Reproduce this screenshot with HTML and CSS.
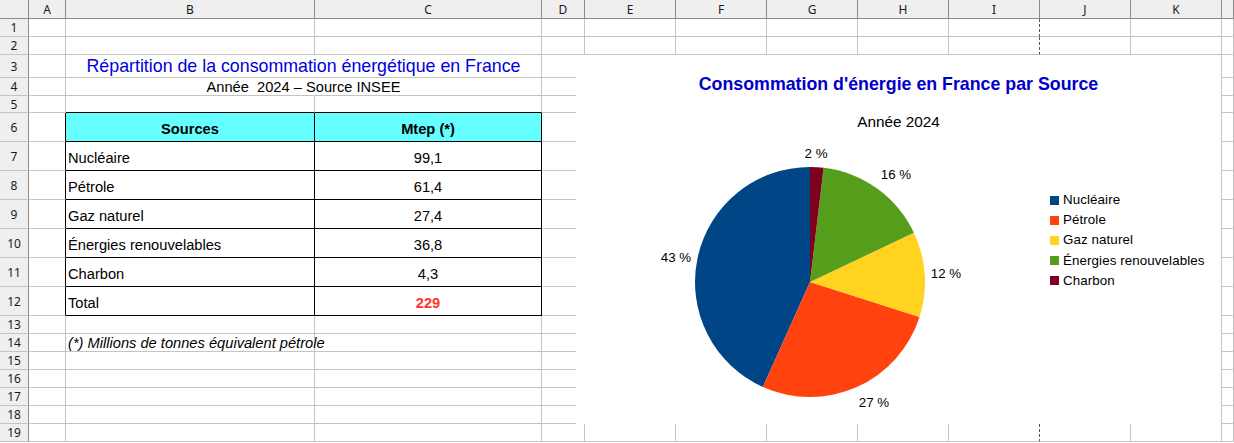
FILE: index.html
```html
<!DOCTYPE html>
<html lang="fr">
<head>
  <meta charset="UTF-8">
  <title>Consommation énergétique en France</title>
  <link rel="stylesheet" href="styles.css">
</head>
<body>
  <div class="sheet">
    <!-- column headers -->
    <div class="hd corner"></div>
    <div class="hd col">A</div><div class="hd col">B</div><div class="hd col">C</div><div class="hd col">D</div>
    <div class="hd col">E</div><div class="hd col">F</div><div class="hd col">G</div><div class="hd col">H</div>
    <div class="hd col">I</div><div class="hd col">J</div><div class="hd col">K</div><div class="hd col"></div>

    <!-- 1 -->
    <div class="hd rh">1</div>
    <div class="c"></div><div class="c"></div><div class="c"></div><div class="c"></div><div class="c"></div><div class="c"></div>
    <div class="c"></div><div class="c"></div><div class="c pb"></div><div class="c"></div><div class="c"></div><div class="c"></div>
    <!-- 2 -->
    <div class="hd rh">2</div>
    <div class="c"></div><div class="c"></div><div class="c"></div><div class="c"></div><div class="c"></div><div class="c"></div>
    <div class="c"></div><div class="c"></div><div class="c pb"></div><div class="c"></div><div class="c"></div><div class="c"></div>
    <!-- 3 -->
    <div class="hd rh">3</div>
    <div class="c"></div><div class="c span2 center sheet-title">Répartition de la consommation énergétique en France</div>
    <div class="c"></div><div class="c"></div><div class="c"></div>
    <div class="c"></div><div class="c"></div><div class="c pb"></div><div class="c"></div><div class="c"></div><div class="c"></div>
    <!-- 4 -->
    <div class="hd rh">4</div>
    <div class="c"></div><div class="c span2 center">Année&nbsp; 2024 – Source INSEE</div>
    <div class="c"></div><div class="c"></div><div class="c"></div>
    <div class="c"></div><div class="c"></div><div class="c pb"></div><div class="c"></div><div class="c"></div><div class="c"></div>
    <!-- 5 -->
    <div class="hd rh">5</div>
    <div class="c"></div><div class="c tb-top"></div><div class="c tb-top"></div><div class="c"></div><div class="c"></div><div class="c"></div>
    <div class="c"></div><div class="c"></div><div class="c pb"></div><div class="c"></div><div class="c"></div><div class="c"></div>
    <!-- 6 -->
    <div class="hd rh">6</div>
    <div class="c tb-left"></div><div class="c tb head center">Sources</div><div class="c tb head center">Mtep (*)</div>
    <div class="c"></div><div class="c"></div><div class="c"></div>
    <div class="c"></div><div class="c"></div><div class="c pb"></div><div class="c"></div><div class="c"></div><div class="c"></div>
    <!-- 7 -->
    <div class="hd rh">7</div>
    <div class="c tb-left"></div><div class="c tb">Nucléaire</div><div class="c tb center">99,1</div>
    <div class="c"></div><div class="c"></div><div class="c"></div>
    <div class="c"></div><div class="c"></div><div class="c pb"></div><div class="c"></div><div class="c"></div><div class="c"></div>
    <!-- 8 -->
    <div class="hd rh">8</div>
    <div class="c tb-left"></div><div class="c tb">Pétrole</div><div class="c tb center">61,4</div>
    <div class="c"></div><div class="c"></div><div class="c"></div>
    <div class="c"></div><div class="c"></div><div class="c pb"></div><div class="c"></div><div class="c"></div><div class="c"></div>
    <!-- 9 -->
    <div class="hd rh">9</div>
    <div class="c tb-left"></div><div class="c tb">Gaz naturel</div><div class="c tb center">27,4</div>
    <div class="c"></div><div class="c"></div><div class="c"></div>
    <div class="c"></div><div class="c"></div><div class="c pb"></div><div class="c"></div><div class="c"></div><div class="c"></div>
    <!-- 10 -->
    <div class="hd rh">10</div>
    <div class="c tb-left"></div><div class="c tb">Énergies renouvelables</div><div class="c tb center">36,8</div>
    <div class="c"></div><div class="c"></div><div class="c"></div>
    <div class="c"></div><div class="c"></div><div class="c pb"></div><div class="c"></div><div class="c"></div><div class="c"></div>
    <!-- 11 -->
    <div class="hd rh">11</div>
    <div class="c tb-left"></div><div class="c tb">Charbon</div><div class="c tb center">4,3</div>
    <div class="c"></div><div class="c"></div><div class="c"></div>
    <div class="c"></div><div class="c"></div><div class="c pb"></div><div class="c"></div><div class="c"></div><div class="c"></div>
    <!-- 12 -->
    <div class="hd rh">12</div>
    <div class="c tb-left"></div><div class="c tb">Total</div><div class="c tb center total">229</div>
    <div class="c"></div><div class="c"></div><div class="c"></div>
    <div class="c"></div><div class="c"></div><div class="c pb"></div><div class="c"></div><div class="c"></div><div class="c"></div>
    <!-- 13 -->
    <div class="hd rh">13</div>
    <div class="c"></div><div class="c"></div><div class="c"></div><div class="c"></div><div class="c"></div><div class="c"></div>
    <div class="c"></div><div class="c"></div><div class="c pb"></div><div class="c"></div><div class="c"></div><div class="c"></div>
    <!-- 14 -->
    <div class="hd rh">14</div>
    <div class="c"></div><div class="c note">(*) Millions de tonnes équivalent pétrole</div><div class="c"></div><div class="c"></div><div class="c"></div><div class="c"></div>
    <div class="c"></div><div class="c"></div><div class="c pb"></div><div class="c"></div><div class="c"></div><div class="c"></div>
    <!-- 15 -->
    <div class="hd rh">15</div>
    <div class="c"></div><div class="c"></div><div class="c"></div><div class="c"></div><div class="c"></div><div class="c"></div>
    <div class="c"></div><div class="c"></div><div class="c pb"></div><div class="c"></div><div class="c"></div><div class="c"></div>
    <!-- 16 -->
    <div class="hd rh">16</div>
    <div class="c"></div><div class="c"></div><div class="c"></div><div class="c"></div><div class="c"></div><div class="c"></div>
    <div class="c"></div><div class="c"></div><div class="c pb"></div><div class="c"></div><div class="c"></div><div class="c"></div>
    <!-- 17 -->
    <div class="hd rh">17</div>
    <div class="c"></div><div class="c"></div><div class="c"></div><div class="c"></div><div class="c"></div><div class="c"></div>
    <div class="c"></div><div class="c"></div><div class="c pb"></div><div class="c"></div><div class="c"></div><div class="c"></div>
    <!-- 18 -->
    <div class="hd rh">18</div>
    <div class="c"></div><div class="c"></div><div class="c"></div><div class="c"></div><div class="c"></div><div class="c"></div>
    <div class="c"></div><div class="c"></div><div class="c pb"></div><div class="c"></div><div class="c"></div><div class="c"></div>
    <!-- 19 -->
    <div class="hd rh">19</div>
    <div class="c"></div><div class="c"></div><div class="c"></div><div class="c"></div><div class="c"></div><div class="c"></div>
    <div class="c"></div><div class="c"></div><div class="c pb"></div><div class="c"></div><div class="c"></div><div class="c"></div>

    <!-- chart object floating over the cells -->
    <div class="chart">
      <div class="chart-title">Consommation d'énergie en France par Source</div>
      <div class="chart-subtitle">Année 2024</div>
      <div class="chart-body">
        <svg class="pie" width="310" height="293" viewBox="0 0 310 293">
          <g transform="translate(154 151)">
            <path fill="#004586" d="M0 0L0 -115A115 115 0 0 0 -47.14 104.89Z"/>
            <path fill="#ff420e" d="M0 0L-47.14 104.89A115 115 0 0 0 109.56 34.96Z"/>
            <path fill="#ffd320" d="M0 0L109.56 34.96A115 115 0 0 0 103.88 -49.32Z"/>
            <path fill="#579d1c" d="M0 0L103.88 -49.32A115 115 0 0 0 13.62 -114.19Z"/>
            <path fill="#7e0021" d="M0 0L13.62 -114.19A115 115 0 0 0 0 -115Z"/>
          </g>
          <g class="pie-labels">
            <text x="160" y="22">2 %</text>
            <text x="240" y="43">16 %</text>
            <text x="290" y="142">12 %</text>
            <text x="218" y="271">27 %</text>
            <text x="20" y="126">43 %</text>
          </g>
        </svg>
        <ul class="legend">
          <li><span class="swatch nuc"></span>Nucléaire</li>
          <li><span class="swatch pet"></span>Pétrole</li>
          <li><span class="swatch gaz"></span>Gaz naturel</li>
          <li><span class="swatch enr"></span>Énergies renouvelables</li>
          <li><span class="swatch cha"></span>Charbon</li>
        </ul>
      </div>
    </div>
  </div>
</body>
</html>
```

FILE: styles.css
```css
/* Base */
html, body {
  margin: 0;
  overflow: hidden;
  background: #fff;
}

body {
  font-family: "Liberation Sans", Arial, sans-serif;
  color: #000;
}

/* Spreadsheet grid */
.sheet {
  position: relative;
  display: grid;
  grid-template-columns: 29px 37px 249px 227px 43px repeat(7, 91px) 1fr;
  grid-template-rows: 19px 18px 18px 23px 18px 17px repeat(7, 29px) repeat(7, 18px);
}

.c {
  box-sizing: border-box;
  display: flex;
  align-items: center;
  min-width: 0;
  padding: 0 2px;
  border-right: 1px solid #c4c4c4;
  border-bottom: 1px solid #c4c4c4;
  font-size: 14.67px;
  white-space: nowrap;
}

.span2 {
  grid-column: span 2;
}

.center {
  justify-content: center;
}

/* page break marker */
.pb {
  border-right: 1px dashed #555;
}

/* Headers */
.hd {
  box-sizing: border-box;
  display: flex;
  align-items: center;
  justify-content: center;
  background: #efefef;
  font-family: "Noto Sans", sans-serif;
  font-size: 12px;
  color: #1a1a1a;
}

.corner,
.col {
  border-right: 1px solid #8c8c8c;
  border-bottom: 1px solid #8c8c8c;
}

.rh {
  border-right: 1px solid #8c8c8c;
  border-bottom: 1px solid #c4c4c4;
}

/* Title block */
.sheet-title {
  font-size: 17.8px;
  color: #0000dd;
}

/* Data table */
.tb-top {
  border-bottom-color: #000;
}

.tb-left {
  border-right-color: #000;
}

.tb {
  padding-top: 3px;
  border-right-color: #000;
  border-bottom-color: #000;
}

.head {
  background: #66ffff;
  font-weight: bold;
}

.total {
  font-weight: bold;
  color: #ff3333;
}

.note {
  font-style: italic;
  overflow: visible;
}

/* Chart */
.chart {
  position: absolute;
  left: 576px;
  top: 55px;
  width: 645px;
  height: 369px;
  background: #fff;
}

.chart-title {
  padding-top: 19px;
  font-size: 17.8px;
  line-height: 20px;
  font-weight: bold;
  text-align: center;
  color: #0000cc;
}

.chart-subtitle {
  margin-top: 19px;
  font-size: 15.33px;
  line-height: 18px;
  text-align: center;
}

.chart-body {
  display: flex;
}

.pie {
  flex: none;
  margin-left: 80px;
}

.pie-labels text {
  font-family: "Liberation Sans", Arial, sans-serif;
  font-size: 13.33px;
  text-anchor: middle;
  dominant-baseline: central;
  fill: #000;
}

.legend {
  list-style: none;
  margin: 0 0 0 84px;
  padding: 59px 0 0;
  font-size: 13.33px;
  line-height: 20.2px;
  letter-spacing: 0.1px;
}

.legend li {
  display: flex;
  align-items: center;
  gap: 4px;
}

.swatch {
  width: 9px;
  height: 9px;
}

.nuc { background: #004586; }
.pet { background: #ff420e; }
.gaz { background: #ffd320; }
.enr { background: #579d1c; }
.cha { background: #7e0021; }
```
